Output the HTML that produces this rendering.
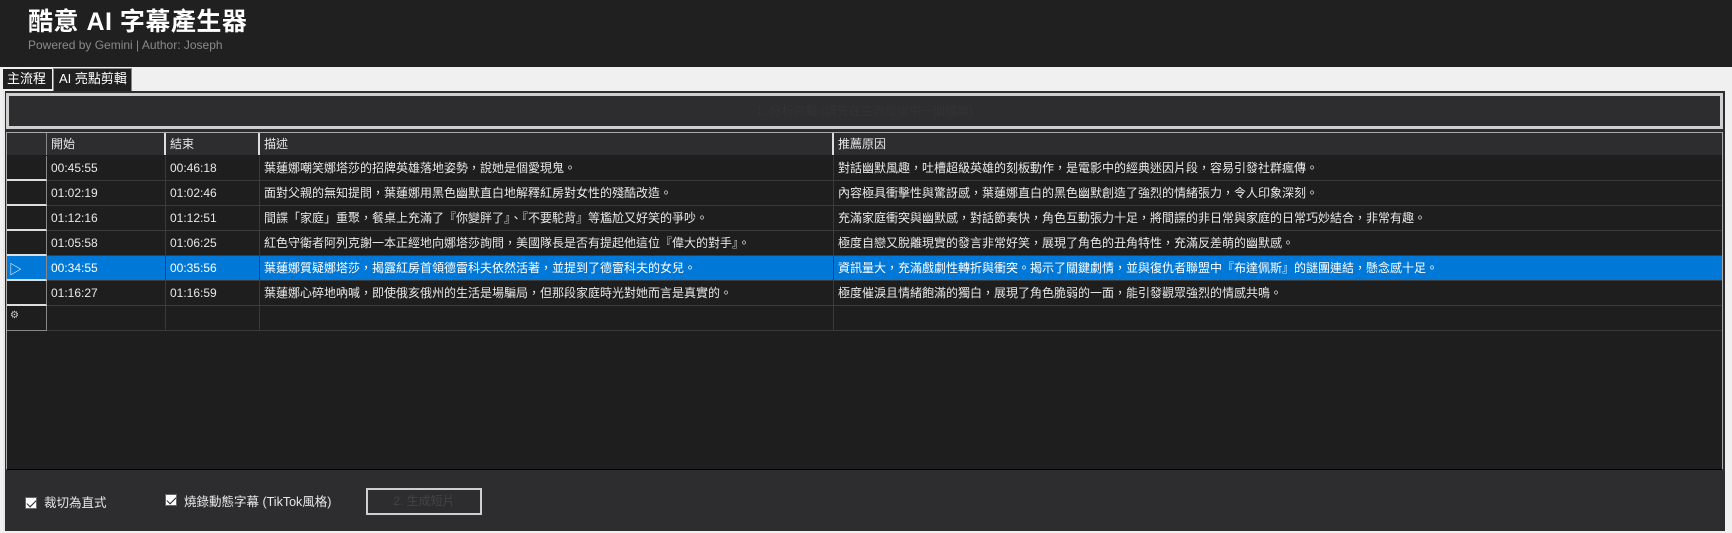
<!DOCTYPE html>
<html><head><meta charset="utf-8"><style>
*{margin:0;padding:0;box-sizing:border-box}
body{width:1732px;height:533px;background:#f0f0f0;font-family:"Liberation Sans","Noto Sans CJK TC",sans-serif;position:relative;overflow:hidden;color:#eee}
.hdr{position:absolute;left:0;top:0;width:1732px;height:67px;background:#202020}
.t1{position:absolute;left:28px;top:2px;font-size:25px;font-weight:bold;color:#fff;letter-spacing:0.5px}
.t2{position:absolute;left:28px;top:38px;font-size:12px;color:#8a8a8a}
.tab{position:absolute;font-size:13px;color:#fff;background:#202020;padding:1px 4px;line-height:18px}
.panel{position:absolute;left:3px;top:91px;width:1722px;height:440px;background:#2d2d30;border-left:2px solid #e8e8e8}
.btn1{position:absolute;left:6px;top:93px;width:1717px;height:36px;border:3px solid #cfcfcf;background:#2d2d30;text-align:center;font-size:12px;line-height:30px;color:#333}
.grid{position:absolute;left:6px;top:132px;width:1717px;height:338px;background:#1e1e1e;border:1px solid #aaa;border-bottom:1px solid #000}
.row{position:absolute;left:0;height:25px;width:1715px;border-bottom:1px solid #3a3a3a}
.c{position:absolute;top:0;height:24px;line-height:24px;font-size:12px;padding-left:4px;border-right:1px solid #3a3a3a;white-space:nowrap;overflow:hidden;color:#e8e8e8}
.rh{position:absolute;left:0;width:40px;height:25px;border-right:1px solid #888;border-bottom:2px solid #ddd}
.head .c{background:#2d2d30;border-right:2px solid #ddd;height:22px;line-height:22px}
.sel .c{background:#0078d7;color:#fff}
.bot{position:absolute;left:5px;top:470px;width:1720px;height:61px;background:#2d2d30}
.cb{position:absolute;width:12px;height:12px;background:#fff;border:1px solid #666}
.cb::after{content:"";position:absolute;left:3px;top:0px;width:4px;height:8px;border:solid #222;border-width:0 1.5px 1.5px 0;transform:rotate(45deg)}
.lbl{position:absolute;font-size:12.5px;color:#e8e8e8}
.btn2{position:absolute;left:366px;top:488px;width:116px;height:27px;border:2px solid #cfcfcf;text-align:center;font-size:12px;line-height:23px;color:#444}
</style></head><body>
<div class="hdr"><div class="t1">酷意 AI 字幕產生器</div><div class="t2">Powered by Gemini | Author: Joseph</div></div>
<div class="tab" style="left:3px;top:69px;height:20px;width:49px">主流程</div>
<div class="tab" style="left:53px;top:68px;height:23px;width:79px;border:1px solid #888;border-bottom:none;padding-left:5px">AI 亮點剪輯</div>
<div class="panel"></div>
<div class="btn1">1. 分析亮點 (請先在主流程選中一個檔案)</div>
<div class="grid">
 <div class="row head" style="top:0;height:22px;border-bottom:2px solid #aaa">
  <div class="c" style="left:0;width:40px;border-right:1px solid #888"></div>
  <div class="c" style="left:40px;width:119px">開始</div>
  <div class="c" style="left:159px;width:94px">結束</div>
  <div class="c" style="left:253px;width:574px">描述</div>
  <div class="c" style="left:827px;width:888px;border-right:none">推薦原因</div>
 </div>
 <div id="rows"></div>
</div>
<div class="bot"></div>
<div class="cb" style="left:25px;top:497px"></div><div class="lbl" style="left:44px;top:492px">裁切為直式</div>
<div class="cb" style="left:165px;top:494px"></div><div class="lbl" style="left:184px;top:491px">燒錄動態字幕 (TikTok風格)</div>
<div class="btn2">2. 生成短片</div>
<script>
var d=[["00:45:55","00:46:18","葉蓮娜嘲笑娜塔莎的招牌英雄落地姿勢，說她是個愛現鬼。","對話幽默風趣，吐槽超級英雄的刻板動作，是電影中的經典迷因片段，容易引發社群瘋傳。"],
["01:02:19","01:02:46","面對父親的無知提問，葉蓮娜用黑色幽默直白地解釋紅房對女性的殘酷改造。","內容極具衝擊性與驚訝感，葉蓮娜直白的黑色幽默創造了強烈的情緒張力，令人印象深刻。"],
["01:12:16","01:12:51","間諜「家庭」重聚，餐桌上充滿了『你變胖了』、『不要駝背』等尷尬又好笑的爭吵。","充滿家庭衝突與幽默感，對話節奏快，角色互動張力十足，將間諜的非日常與家庭的日常巧妙結合，非常有趣。"],
["01:05:58","01:06:25","紅色守衛者阿列克謝一本正經地向娜塔莎詢問，美國隊長是否有提起他這位『偉大的對手』。","極度自戀又脫離現實的發言非常好笑，展現了角色的丑角特性，充滿反差萌的幽默感。"],
["00:34:55","00:35:56","葉蓮娜質疑娜塔莎，揭露紅房首領德雷科夫依然活著，並提到了德雷科夫的女兒。","資訊量大，充滿戲劇性轉折與衝突。揭示了關鍵劇情，並與復仇者聯盟中『布達佩斯』的謎團連結，懸念感十足。"],
["01:16:27","01:16:59","葉蓮娜心碎地吶喊，即使俄亥俄州的生活是場騙局，但那段家庭時光對她而言是真實的。","極度催淚且情緒飽滿的獨白，展現了角色脆弱的一面，能引發觀眾強烈的情感共鳴。"],["","","",""]];
var h="";d.forEach(function(r,i){var t=23+i*25,s=i==4?" sel":"";
var m=i==4?'<span style="position:absolute;left:2px;top:3px;font-size:13px;color:#fff">▷</span>':(i==6?'<span style="position:absolute;left:3px;top:4px;font-size:10px;color:#ccc">⚙</span>':'');
h+='<div class="row'+s+'" style="top:'+t+'px"><div class="rh" style="'+(i==6?'border-bottom:1px solid #888':'')+(i==4?';background:#0078d7':'')+'">'+m+'</div><div class="c" style="left:40px;width:119px">'+r[0]+'</div><div class="c" style="left:159px;width:94px">'+r[1]+'</div><div class="c" style="left:253px;width:574px">'+r[2]+'</div><div class="c" style="left:827px;width:888px;border-right:none">'+r[3]+'</div></div>';});
document.getElementById("rows").innerHTML=h;
</script>
</body></html>
